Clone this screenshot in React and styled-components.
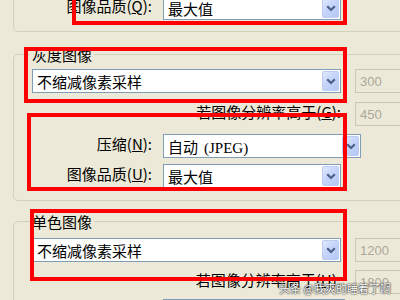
import React from 'react';
import styled, { createGlobalStyle } from 'styled-components';

const GlobalStyle = createGlobalStyle`
  html, body {
    margin: 0;
    padding: 0;
  }

  body {
    background: #ece9d8;
    font-family: "Noto Sans CJK SC", "Liberation Sans", sans-serif;
    color: #000;
    overflow: hidden;
  }
`;

const Screen = styled.div`
  position: relative;
  width: 400px;
  height: 300px;
  overflow: hidden;
  background: #ece9d8;
`;

const Column = styled.div`
  margin-top: -40px;
  padding-left: 13px;
  width: 440px;
`;

const Group = styled.fieldset`
  margin: ${p => p.$top || 0}px 0 0;
  padding: ${p => p.$padTop || 0}px 0 ${p => p.$padBottom || 0}px 18px;
  border: 1px solid #d0d0bf;
  border-radius: 5px;
  min-width: 0;
`;

const Legend = styled.legend`
  padding: 0 2px;
  margin-left: -2px;
  font-size: 15px;
  line-height: 17px;
`;

const Row = styled.div`
  display: flex;
  align-items: center;
  height: 24px;
  margin-bottom: ${p => p.$after || 0}px;
`;

const Label = styled.label`
  flex: none;
  align-self: flex-start;
  width: ${p => p.$w}px;
  margin-top: 1px;
  margin-right: ${p => (p.$gap === undefined ? 11 : p.$gap)}px;
  text-align: right;
  font-size: 15px;
  line-height: 17px;
  white-space: nowrap;
`;

const Key = styled.span`
  text-decoration: underline;
  text-underline-offset: 1px;
`;

const Combo = styled.div`
  flex: none;
  display: flex;
  align-items: center;
  width: ${p => p.$w}px;
  height: 24px;
  box-sizing: border-box;
  border: 1px solid #7f9db9;
  background: #fff;
  padding-left: 4px;
  font-size: 15px;
  white-space: nowrap;
`;

const ComboText = styled.span`
  flex: 1;
  overflow: hidden;
`;

const Serif = styled.span`
  font-family: "Liberation Serif", serif;
  margin-left: 6px;
`;

const DropButton = styled.span`
  flex: none;
  align-self: stretch;
  display: flex;
  align-items: center;
  justify-content: center;
  width: 17px;
  margin: 1px;
  box-sizing: border-box;
  border: 1px solid #bccbee;
  border-radius: 2px;
  background: linear-gradient(135deg, #e0e8fd 0%, #c6d5fb 45%, #b4c7f4 100%);
`;

const Field = styled.div`
  flex: none;
  display: flex;
  align-items: center;
  width: 70px;
  height: 24px;
  box-sizing: border-box;
  margin-left: 14px;
  padding-left: 4px;
  border: 1px solid #c9c7ba;
  background: #ece9d8;
  color: #aca899;
  font-family: "Liberation Sans", sans-serif;
  font-size: 13px;
`;

const Highlight = styled.div`
  position: absolute;
  left: ${p => p.$x}px;
  top: ${p => p.$y}px;
  width: ${p => p.$w}px;
  height: ${p => p.$h}px;
  box-sizing: border-box;
  border: 4px solid #ff0000;
  pointer-events: none;
`;

const Watermark = styled.div`
  position: absolute;
  right: 9px;
  bottom: 5px;
  color: #fff;
  font-size: 11px;
  line-height: 13px;
  text-shadow: 0 0 2px rgba(0, 0, 0, 0.9), 0 0 1px rgba(0, 0, 0, 0.9);
  white-space: nowrap;
`;

function Chevron() {
  return (
    <svg width="10" height="7" viewBox="0 0 10 7">
      <path d="M1.2 1.3 L5 5 L8.8 1.3" fill="none" stroke="#4d6185" strokeWidth="2.3" />
    </svg>
  );
}

function Select({ width, children }) {
  return (
    <Combo $w={width}>
      <ComboText>{children}</ComboText>
      <DropButton>
        <Chevron />
      </DropButton>
    </Combo>
  );
}

export default function App() {
  return (
    <Screen>
      <GlobalStyle />
      <Column>
        <Group $padTop={35} $padBottom={11}>
          <Row>
            <Label $w={120}>图像品质(<Key>Q</Key>):</Label>
            <Select width={178}>最大值</Select>
          </Row>
        </Group>

        <Group $top={14} $padTop={6} $padBottom={12}>
          <Legend>灰度图像</Legend>
          <Row $after={9}>
            <Select width={309}>不缩减像素采样</Select>
            <Field>300</Field>
          </Row>
          <Row $after={8}>
            <Label $w={309} $gap={0}>若图像分辨率高于(<Key>G</Key>):</Label>
            <Field>450</Field>
          </Row>
          <Row $after={6}>
            <Label $w={120}>压缩(<Key>N</Key>):</Label>
            <Select width={198}>
              自动<Serif>(JPEG)</Serif>
            </Select>
          </Row>
          <Row>
            <Label $w={120}>图像品质(<Key>U</Key>):</Label>
            <Select width={178}>最大值</Select>
          </Row>
        </Group>

        <Group $top={12} $padTop={8} $padBottom={10}>
          <Legend>单色图像</Legend>
          <Row $after={8}>
            <Select width={309}>不缩减像素采样</Select>
            <Field>1200</Field>
          </Row>
          <Row $after={5}>
            <Label $w={309} $gap={0}>若图像分辨率高于(<Key>H</Key>):</Label>
            <Field>1800</Field>
          </Row>
          <Row>
            <Label $w={120}>压缩(<Key>M</Key>):</Label>
            <Select width={182}>CCITT 组 4</Select>
          </Row>
        </Group>
      </Column>

      <Highlight $x={72} $y={-10} $w={275} $h={35} />
      <Highlight $x={24} $y={47} $w={323} $h={56} />
      <Highlight $x={27} $y={113} $w={320} $h={78} />
      <Highlight $x={30} $y={209} $w={317} $h={72} />

      <Watermark>头条 @我爽的睡着了啊</Watermark>
    </Screen>
  );
}
